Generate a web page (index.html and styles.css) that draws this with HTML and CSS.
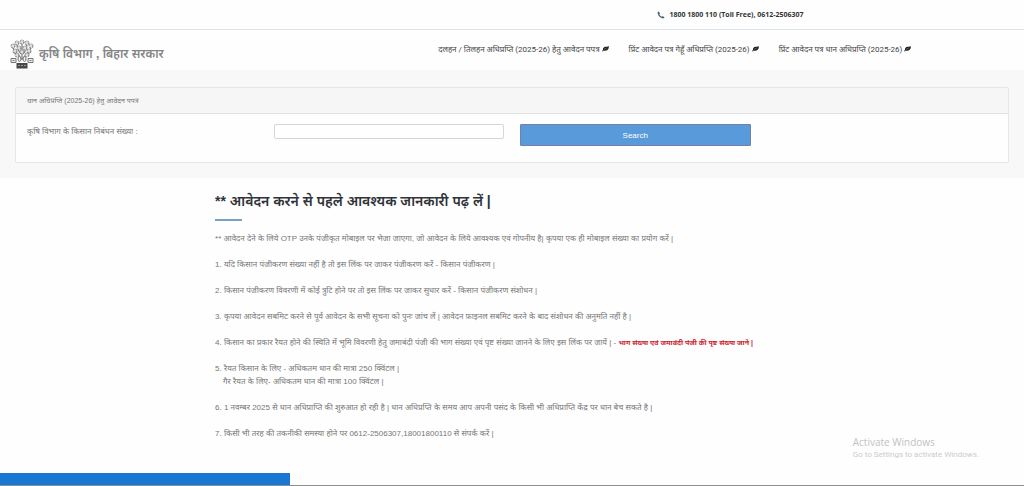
FILE: index.html
```html
<!DOCTYPE html>
<html lang="hi">
<head>
<meta charset="utf-8">
<meta name="viewport" content="width=device-width, initial-scale=1">
<title>कृषि विभाग , बिहार सरकार</title>
<link rel="stylesheet" href="styles.css">
</head>
<body>
<svg class="sprite" aria-hidden="true">
  <symbol id="leaf" viewBox="0 0 16 14"><path d="M15.3 1c.8 4-.2 8-3.600 9.800-2.700 1.400-5.700 1.300-7.900.5L1.800 13.600.3 12.600l2-2.500C1.500 6.500 4 3.700 7.500 3c3-.5 5.600-.3 7.800-2z" fill="currentColor"/><path d="M4.500 9.300C6 7.500 8 6.700 10.700 6.200" fill="none" stroke="#bbb"/></symbol>
</svg>
<div class="topbar">
  <svg class="phone" viewBox="0 0 14 14" aria-hidden="true"><path d="M3 1 5.300 4.200 4 5.700c.9 1.900 2.300 3.300 4.300 4.300l1.500-1.300L13 11c-.2 1.300-1.200 2.200-2.600 2C5.500 12.300 1.500 8.300 1 3.600.9 2.200 1.700 1.100 3 1z"/></svg>
  <strong>1800 1800 110 (Toll Free), 0612-2506307</strong>
</div>
<header class="header">
  <a class="brand" href="#">
    <svg class="logo" viewBox="0 0 24 30" aria-hidden="true">
      <g fill="none" stroke="#858585" stroke-width="1.300">
        <path d="M12 21V3M11 20C9 15 5 14 3 9M13 20c2-5 6-6 8-11M11 15C8 12 7 9 7 4M13 15c3-3 4-6 4-11M3 13l5 3M21 13l-5 3"/>
      </g>
      <g fill="#ddd" stroke="#777" stroke-width="1" stroke-dasharray="2 1">
        <circle cx="12" cy="3" r="2"/><circle cx="7" cy="4" r="2"/><circle cx="17" cy="4" r="2"/><circle cx="3" cy="7" r="2"/><circle cx="21" cy="7" r="2"/><circle cx="9" cy="9" r="2"/><circle cx="15" cy="9" r="2"/><circle cx="5" cy="12" r="2"/><circle cx="19" cy="12" r="2"/><circle cx="12" cy="13" r="2"/><circle cx="7" cy="16" r="2"/><circle cx="17" cy="16" r="2"/>
      </g>
      <g fill="#eee" stroke="#777"><path d="M1 19.500h5v4H1zM18 19.500h5v4h-5z"/><path d="M2.500 21.500h2M19.500 21.500h2"/><ellipse cx="9.500" cy="20" rx="1.500" ry="2.500"/><ellipse cx="14.500" cy="20" rx="1.500" ry="2.500"/></g>
      <path d="M6.500 24h11v5.500h-11z" fill="#484848"/><path d="M8 26.500h8" stroke="#999" stroke-dasharray="2 1"/>
    </svg>
    <span>कृषि विभाग , बिहार सरकार</span>
  </a>
  <nav class="nav">
    <a href="#">दलहन / तिलहन अधिप्रप्ति (2025-26) हेतु आवेदन पपत्र <svg class="leaf" aria-hidden="true"><use href="#leaf"/></svg></a>
    <a href="#">प्रिंट आवेदन पत्र गेहूँ अधिप्रप्ति (2025-26) <svg class="leaf" aria-hidden="true"><use href="#leaf"/></svg></a>
    <a href="#">प्रिंट आवेदन पत्र धान अधिप्रप्ति (2025-26) <svg class="leaf" aria-hidden="true"><use href="#leaf"/></svg></a>
  </nav>
</header>
<section class="band">
  <div class="panel">
    <h2 class="panel-title">धान अधिप्रप्ति (2025-26) हेतु आवेदन पपत्र</h2>
    <form class="form">
      <label for="reg">कृषि विभाग के किसान निबंधन संख्या :</label>
      <input id="reg" type="text">
      <button type="button">Search</button>
    </form>
  </div>
</section>
<main class="info">
  <h1>** आवेदन करने से पहले आवश्यक जानकारी पढ़ लें |</h1>
  <div class="rule"></div>
  <div class="notes">
    <p>** आवेदन देने के लिये OTP उनके पंजीकृत मोबाइल पर भेजा जाएगा, जो आवेदन के लिये आवश्यक एवं गोपनीय है| कृपया एक ही मोबाइल संख्या का प्रयोग करें |</p>
    <p>1. यदि किसान पंजीकरण संख्या नहीं है तो इस लिंक पर जाकर पंजीकरण करें - <a href="#">किसान पंजीकरण |</a></p>
    <p>2. किसान पंजीकरण विवरणी में कोई त्रुटि होने पर तो इस लिंक पर जाकर सुधार करें - <a href="#">किसान पंजीकरण संशोधन |</a></p>
    <p>3. कृपया आवेदन सबमिट करने से पूर्व आवेदन के सभी सूचना को पुनः जांच लें | आवेदन फ़ाइनल सबमिट करने के बाद संशोधन की अनुमति नहीं है |</p>
    <p>4. किसान का प्रकार रैयत होने की स्थिति में भूमि विवरणी हेतु जमाबंदी पंजी की भाग संख्या एवं पृष्ट संख्या जानने के लिए इस लिंक पर जायें | - <a class="alert" href="#">भाग संख्या एवं जमाबंदी पंजी की पृष्ट संख्या जाने |</a></p>
    <p>5. रैयत किसान के लिए - अधिकतम धान की मात्रा 250 क्विंटल |<span class="sub">गैर रैयत के लिए- अधिकतम धान की मात्रा 100 क्विंटल |</span></p>
    <p>6. 1 नवम्बर 2025 से धान अधिप्राप्ति की शुरुआत हो रही है | धान अधिप्रप्ति के समय आप अपनी पसंद के किसी भी अधिप्राप्ति केंद्र पर धान बेच सकते है |</p>
    <p>7. किसी भी तरह की तकनीकी समस्या होने पर 0612-2506307,18001800110 से संपर्क करें |</p>
  </div>
</main>
<footer class="footer"><div class="footer-block"></div></footer>
<aside class="watermark"><div class="wm-title">Activate Windows</div><div>Go to Settings to activate Windows.</div></aside>
</body>
</html>
```
FILE: styles.css
```css
* { box-sizing: border-box; }
body { margin: 0; min-height: 100vh; display: flex; flex-direction: column; background: #fefefe; color: #777; font: 8px/13px "Liberation Sans", "Noto Sans Devanagari", "Noto Sans", sans-serif; }
a { color: inherit; text-decoration: none; }
.sprite { display: none; }
.topbar { height: 30px; border-bottom: 1px solid #d9e5ea; display: flex; align-items: center; gap: 4px; padding-left: 64.2%; color: #333; font-family: "Open Sans", sans-serif; font-size: 7px; white-space: nowrap; }
.phone { width: 8px; height: 8px; fill: #4d6672; }
.header { height: 40px; display: flex; align-items: center; justify-content: space-between; padding: 0 11% 2px 10px; }
.brand { display: flex; align-items: center; gap: 5px; font-size: 12px; line-height: 20px; font-weight: 600; color: #858585; padding-top: 9px; white-space: nowrap; }
.logo { width: 24px; height: 30px; }
.nav { display: flex; gap: 20px; color: #444; font-family: Roboto, "Noto Sans Devanagari", "Noto Sans", sans-serif; white-space: nowrap; }
.leaf { width: 7px; height: 7px; color: #222; }
.band { background: #f8f8f8; padding: 17px 15px 15px; }
.panel { border: 1px solid #e5e6e6; border-radius: 2px; background: #fefefe; }
.panel-title { margin: 0; padding: 6px 11px; background: #f6f6f6; border-bottom: 1px solid #e0e2e2; font-size: 7px; line-height: 13px; font-weight: 400; }
.form { display: grid; grid-template-columns: 231fr 231fr 231fr 231fr; column-gap: 16px; align-items: start; padding: 10px 11px 16px; }
.form label { padding-top: 1px; }
.form input { width: 100%; height: 15px; border: 1px solid #d6d6d6; border-radius: 2px; background: #fff; font: inherit; }
.form button { height: 22px; border: 1px solid #7480a5; border-radius: 1px; background: #599adb; color: #fff; font: inherit; }
.info { flex: 1; padding: 13px 21% 30px; }
.info h1 { margin: 0; font-size: 14px; line-height: 20px; font-weight: 600; color: #303338; white-space: nowrap; }
.rule { width: 27px; height: 2px; margin-top: 8px; background: #77a2c0; }
.notes { display: grid; gap: 13px; margin-top: 11px; white-space: nowrap; }
.notes p { margin: 0; }
.sub { display: block; padding-left: 8px; }
.alert { color: #cb2430; font-size: 7px; font-weight: 700; }
.footer { border-bottom: 1px solid #8e8e8e; }
.footer-block { width: 28.3%; height: 12px; background: #1976d2; }
.watermark { position: absolute; right: 45px; bottom: 26px; color: #ccc; font: 8px/11px Roboto, sans-serif; }
.wm-title { font: 10px/13px "Open Sans", sans-serif; color: #c2c2c2; }
```
